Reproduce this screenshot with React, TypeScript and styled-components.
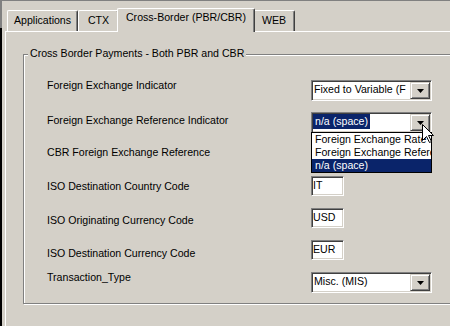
import React from "react";
import styled, { createGlobalStyle } from "styled-components";

const FACE = "#D4D0C8";
const SHADOW = "#808080";
const DARK = "#404040";
const SELECT = "#0A246A";

const Global = createGlobalStyle`
  html, body { margin: 0; padding: 0; background: ${FACE}; }
  body {
    font-family: "Liberation Sans", Arial, sans-serif;
    font-size: 10.6px;
    color: #000;
  }
`;

const Window = styled.div`
  width: 450px;
  height: 326px;
  box-sizing: border-box;
  overflow: hidden;
  background: ${FACE};
  border-style: solid;
  border-width: 1px 0 0 2px;
  border-image: linear-gradient(to bottom, ${SHADOW} 0 28px, #000 28px) 1;
  padding: 7px 0 0 3px;
  display: flex;
  flex-direction: column;
`;

const TabStrip = styled.div`
  position: relative;
  z-index: 1;
  display: flex;
  align-items: flex-end;
  height: 23px;
  padding-left: 2px;
`;

const Tab = styled.div<{ $width: number; $active?: boolean }>`
  box-sizing: border-box;
  width: ${(p) => p.$width}px;
  height: ${(p) => (p.$active ? 24 : 21)}px;
  margin: ${(p) => (p.$active ? "0 -2px -1px -2px" : "0")};
  padding-top: ${(p) => (p.$active ? 2 : 3)}px;
  background: ${FACE};
  border-top: 1px solid #fff;
  border-left: 1px solid #fff;
  border-right: 1px solid ${DARK};
  border-radius: 2px 2px 0 0;
  box-shadow: inset -1px 0 0 ${SHADOW};
  text-align: center;
  line-height: 13px;
  white-space: nowrap;
  position: relative;
  z-index: ${(p) => (p.$active ? 2 : 1)};
`;

const Panel = styled.div`
  flex: 1;
  border-top: 1px solid #fff;
  border-left: 1px solid #fff;
  padding: 22px 0 0 17px;
  margin-right: -40px;
`;

const GroupBox = styled.div`
  position: relative;
  box-sizing: border-box;
  width: 460px;
  height: 250px;
  border: 1px solid ${SHADOW};
  box-shadow: 1px 1px 0 #fff, inset 1px 1px 0 #fff;
  padding: 25px 0 0 23px;
`;

const GroupTitle = styled.div`
  position: absolute;
  top: -8px;
  left: 4px;
  padding: 0 2px;
  background: ${FACE};
  line-height: 13px;
  white-space: nowrap;
`;

const FieldGrid = styled.div`
  display: grid;
  grid-template-columns: 264px 130px;
  grid-auto-rows: 32px;
  align-items: start;
`;

const Label = styled.div<{ $offset: number }>`
  margin-top: ${(p) => p.$offset}px;
  line-height: 13px;
  white-space: nowrap;
`;

const Sunken = styled.div<{ $width: number }>`
  position: relative;
  box-sizing: border-box;
  display: flex;
  width: ${(p) => p.$width}px;
  height: ${(p) => (p.$width > 60 ? 21 : 20)}px;
  border: 1px solid;
  border-color: ${SHADOW} #fff #fff ${SHADOW};
  padding: 1px;
  background: #fff;
  box-shadow: inset 1px 1px 0 ${DARK}, inset -1px -1px 0 ${FACE};
`;

const Field = styled.div`
  flex: 1;
  overflow: hidden;
  white-space: nowrap;
  padding-left: 1px;
  line-height: 15px;
`;

const TextValue = styled.div`
  flex: 1;
  overflow: hidden;
  white-space: nowrap;
  line-height: 14px;
`;

const Selected = styled.span`
  display: inline-block;
  background: ${SELECT};
  color: #fff;
  padding: 0 2px;
  margin-left: -1px;
  height: 15px;
  line-height: 15px;
`;

const DropButton = styled.div`
  box-sizing: border-box;
  width: 20px;
  height: 100%;
  background: ${FACE};
  border: 1px solid;
  border-color: ${FACE} ${DARK} ${DARK} ${FACE};
  box-shadow: inset 1px 1px 0 #fff, inset -1px -1px 0 ${SHADOW};
  display: flex;
  align-items: center;
  justify-content: center;
`;

const ListBox = styled.div`
  position: absolute;
  top: 100%;
  left: -1px;
  width: 121px;
  box-sizing: border-box;
  background: #fff;
  border: 1px solid #000;
  z-index: 3;
`;

const ListItem = styled.div<{ $selected?: boolean }>`
  height: 13px;
  line-height: 13px;
  padding-left: 3px;
  white-space: nowrap;
  overflow: hidden;
  background: ${(p) => (p.$selected ? SELECT : "#fff")};
  color: ${(p) => (p.$selected ? "#fff" : "#000")};
`;

const Pointer = styled.svg`
  position: absolute;
  left: 110px;
  top: 11px;
  z-index: 4;
`;

const Arrow = () => (
  <svg width="7" height="4" viewBox="0 0 7 4">
    <polygon points="0,0 7,0 3.5,4" fill="#000" />
  </svg>
);

const Combo: React.FC<{ value: string; open?: boolean }> = ({ value, open }) => (
  <Sunken $width={121}>
    <Field>{open ? <Selected>{value}</Selected> : value}</Field>
    <DropButton>
      <Arrow />
    </DropButton>
    {open && (
      <>
        <ListBox>
          <ListItem>Foreign Exchange Rate</ListItem>
          <ListItem>Foreign Exchange Reference</ListItem>
          <ListItem $selected>n/a (space)</ListItem>
        </ListBox>
        <Pointer width="13" height="20" viewBox="0 0 13 20">
          <path
            d="M0.5 0.5 L0.5 16.5 L4.5 12.5 L7.5 18.5 L9.5 17.5 L6.5 11.5 L11.5 11.5 Z"
            fill="#fff"
            stroke="#000"
            strokeWidth="1"
          />
        </Pointer>
      </>
    )}
  </Sunken>
);

const TextBox: React.FC<{ value: string }> = ({ value }) => (
  <Sunken $width={33}>
    <TextValue>{value}</TextValue>
  </Sunken>
);

type Row = { label: string; offset: number; control: React.ReactNode };

const rows: Row[] = [
  { label: "Foreign Exchange Indicator", offset: -1, control: <Combo value="Fixed to Variable (F" /> },
  { label: "Foreign Exchange Reference Indicator", offset: 2, control: <Combo value="n/a (space)" open /> },
  { label: "CBR Foreign Exchange Reference", offset: 2, control: <div /> },
  { label: "ISO Destination Country Code", offset: 4, control: <TextBox value="IT" /> },
  { label: "ISO Originating Currency Code", offset: 6, control: <TextBox value="USD" /> },
  { label: "ISO Destination Currency Code", offset: 7, control: <TextBox value="EUR" /> },
  { label: "Transaction_Type", offset: -1, control: <Combo value="Misc. (MIS)" /> },
];

const tabs = [
  { name: "Applications", width: 71 },
  { name: "CTX", width: 41 },
  { name: "Cross-Border (PBR/CBR)", width: 138, active: true },
  { name: "WEB", width: 42 },
];

export default function App() {
  return (
    <>
      <Global />
      <Window>
        <TabStrip>
          {tabs.map((t) => (
            <Tab key={t.name} $width={t.width} $active={t.active}>
              {t.name}
            </Tab>
          ))}
        </TabStrip>
        <Panel>
          <GroupBox>
            <GroupTitle>Cross Border Payments - Both PBR and CBR</GroupTitle>
            <FieldGrid>
              {rows.map((r) => (
                <React.Fragment key={r.label}>
                  <Label $offset={r.offset}>{r.label}</Label>
                  {r.control}
                </React.Fragment>
              ))}
            </FieldGrid>
          </GroupBox>
        </Panel>
      </Window>
    </>
  );
}
